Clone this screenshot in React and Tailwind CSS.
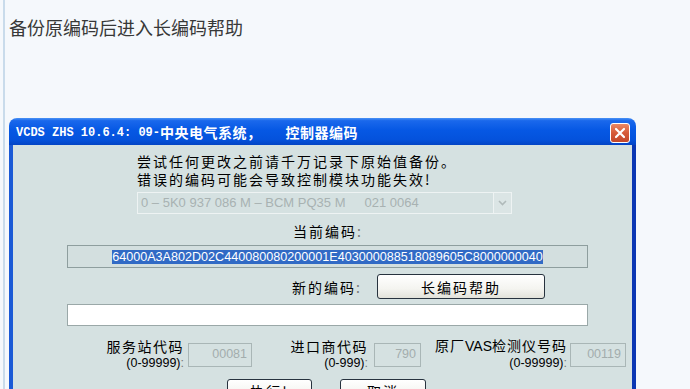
export default function App() {
  return (
    <div className="w-[690px] h-[389px] overflow-hidden bg-[#f5f8fc] pl-[3px]">
      <div className="h-full border-l-2 border-[#c9dbeb] pl-[4px]">
        <div className="pt-[15px] text-[18px] leading-[24px] text-[#383838] font-['Noto_Sans_CJK_SC',sans-serif]">
          备份原编码后进入长编码帮助
        </div>

        <div className="mt-[79px] w-[627px] rounded-t-[8px] overflow-hidden">
          {/* title bar */}
          <div className="h-[27px] flex items-center pl-[7px] pr-[6px] bg-[linear-gradient(to_bottom,#4a92f5_0%,#1a68ec_10%,#0658e4_45%,#0452dc_80%,#0344c4_100%)]">
            <div className="flex items-center text-white font-bold whitespace-pre pt-[2px]">
              <span className="text-[12px] font-['Liberation_Mono',monospace]">VCDS ZHS 10.6.4: 09-</span>
              <span className="text-[14px] tracking-[0.5px] font-['Noto_Sans_CJK_SC',sans-serif]">中央电气系统，</span>
              <span className="ml-[24px] text-[14px] tracking-[0.5px] font-['Noto_Sans_CJK_SC',sans-serif]">控制器编码</span>
            </div>
            <div className="ml-auto self-start mt-[5px] w-[20px] h-[20px] rounded-[3px] border border-white bg-[linear-gradient(to_bottom,#e98866,#d65a38_50%,#c2472a)] flex items-center justify-center">
              <svg width="12" height="12" viewBox="0 0 12 12">
                <path d="M2 2 L10 10 M10 2 L2 10" stroke="#ffffff" strokeWidth="2.2" strokeLinecap="round" />
              </svg>
            </div>
          </div>

          {/* body */}
          <div className="h-[260px] bg-[#d5e1e1] border-l-4 border-r-4 border-l-[#1b5ad6] border-r-[#0b37b3] pt-[7px] text-[14px] leading-[18px] tracking-[2px] text-black font-['Noto_Sans_CJK_SC',sans-serif]">
            <div className="ml-[124px] whitespace-nowrap">尝试任何更改之前请千万记录下原始值备份。</div>
            <div className="ml-[124px] whitespace-nowrap">错误的编码可能会导致控制模块功能失效!</div>

            {/* dropdown */}
            <div className="mt-[4px] ml-[124px] w-[375px] h-[22px] border border-[#eef3f3] bg-[#d5e1e1] flex tracking-normal">
              <div className="flex-1 flex items-center pl-[3px] text-[13px] text-[#a8b2b2] font-['Liberation_Sans',sans-serif] whitespace-pre">
                <span>0 – 5K0 937 086 M – BCM PQ35 M</span>
                <span className="ml-[19px]">021 0064</span>
              </div>
              <div className="w-[18px] h-full border-l border-[#eef3f3] bg-[#dbe5e5] flex items-center justify-center">
                <svg width="9" height="6" viewBox="0 0 9 6">
                  <polyline points="1,1 4.5,4.5 8,1" fill="none" stroke="#b0baba" strokeWidth="1.6" />
                </svg>
              </div>
            </div>

            <div className="mt-[8px] ml-[280px] whitespace-nowrap">
              当前编码<span className="text-[#777]">:</span>
            </div>

            {/* current code */}
            <div className="mt-[5px] ml-[54px] w-[521px] h-[23px] border border-[#8e9e9e] bg-[#d3dfdf] flex items-center justify-center tracking-normal">
              <span className="bg-[#316ac5] text-white text-[12.6px] leading-[14px] font-['Liberation_Sans',sans-serif]">
                64000A3A802D02C440080080200001E403000088518089605C8000000040
              </span>
            </div>

            {/* new code row */}
            <div className="mt-[6px] ml-[279px] flex items-center">
              <div className="w-[85px] whitespace-nowrap">
                新的编码<span className="text-[#777]">:</span>
              </div>
              <div className="w-[168px] h-[25px] rounded-[3px] border border-[#27323e] bg-[linear-gradient(to_bottom,#ffffff,#f4f4f0_60%,#e2e2da)] flex items-center justify-center">
                长编码帮助
              </div>
            </div>

            {/* new code input */}
            <div className="mt-[5px] ml-[54px] w-[521px] h-[22px] bg-white border border-[#9aa8a8]"></div>

            {/* codes row */}
            <div className="mt-[11px] flex items-center leading-[17px]">
              <div className="ml-[91px] w-[80px] flex flex-col items-end whitespace-nowrap">
                <div className="tracking-[1.5px]">服务站代码</div>
                <div className="tracking-normal text-[12.5px] font-['Liberation_Sans',sans-serif]">(0-99999)<span className="text-[#777]">:</span></div>
              </div>
              <div className="ml-[4px] w-[64px] h-[24px] border border-[#a9b6b6] flex items-center justify-end pr-[4px] tracking-normal text-[12.5px] text-[#a3adad] font-['Liberation_Sans',sans-serif]">
                00081
              </div>

              <div className="ml-[39px] w-[77px] flex flex-col items-end whitespace-nowrap">
                <div className="tracking-[1.5px]">进口商代码</div>
                <div className="tracking-normal text-[12.5px] font-['Liberation_Sans',sans-serif]">(0-999)<span className="text-[#777]">:</span></div>
              </div>
              <div className="ml-[6px] w-[47px] h-[24px] border border-[#a9b6b6] flex items-center justify-end pr-[4px] tracking-normal text-[12.5px] text-[#a3adad] font-['Liberation_Sans',sans-serif]">
                790
              </div>

              <div className="ml-[7px] w-[139px] flex flex-col items-end whitespace-nowrap">
                <div className="tracking-[1px]">
                  原厂<span className="tracking-normal font-['Liberation_Sans',sans-serif]">VAS</span>检测仪号码
                </div>
                <div className="tracking-normal text-[12.5px] font-['Liberation_Sans',sans-serif]">(0-99999)<span className="text-[#777]">:</span></div>
              </div>
              <div className="ml-[3px] w-[56px] h-[24px] border border-[#a9b6b6] flex items-center justify-end pr-[4px] tracking-normal text-[12.5px] text-[#a3adad] font-['Liberation_Sans',sans-serif]">
                00119
              </div>
            </div>

            {/* buttons */}
            <div className="mt-[7px] flex">
              <div className="ml-[214px] w-[85px] h-[24px] rounded-[3px] border border-[#27323e] bg-[linear-gradient(to_bottom,#ffffff,#f4f4f0_60%,#e2e2da)] flex items-center justify-center">
                执行!
              </div>
              <div className="ml-[28px] w-[86px] h-[24px] rounded-[3px] border border-[#27323e] bg-[linear-gradient(to_bottom,#ffffff,#f4f4f0_60%,#e2e2da)] flex items-center justify-center">
                取消
              </div>
            </div>
          </div>
        </div>
      </div>
    </div>
  );
}
